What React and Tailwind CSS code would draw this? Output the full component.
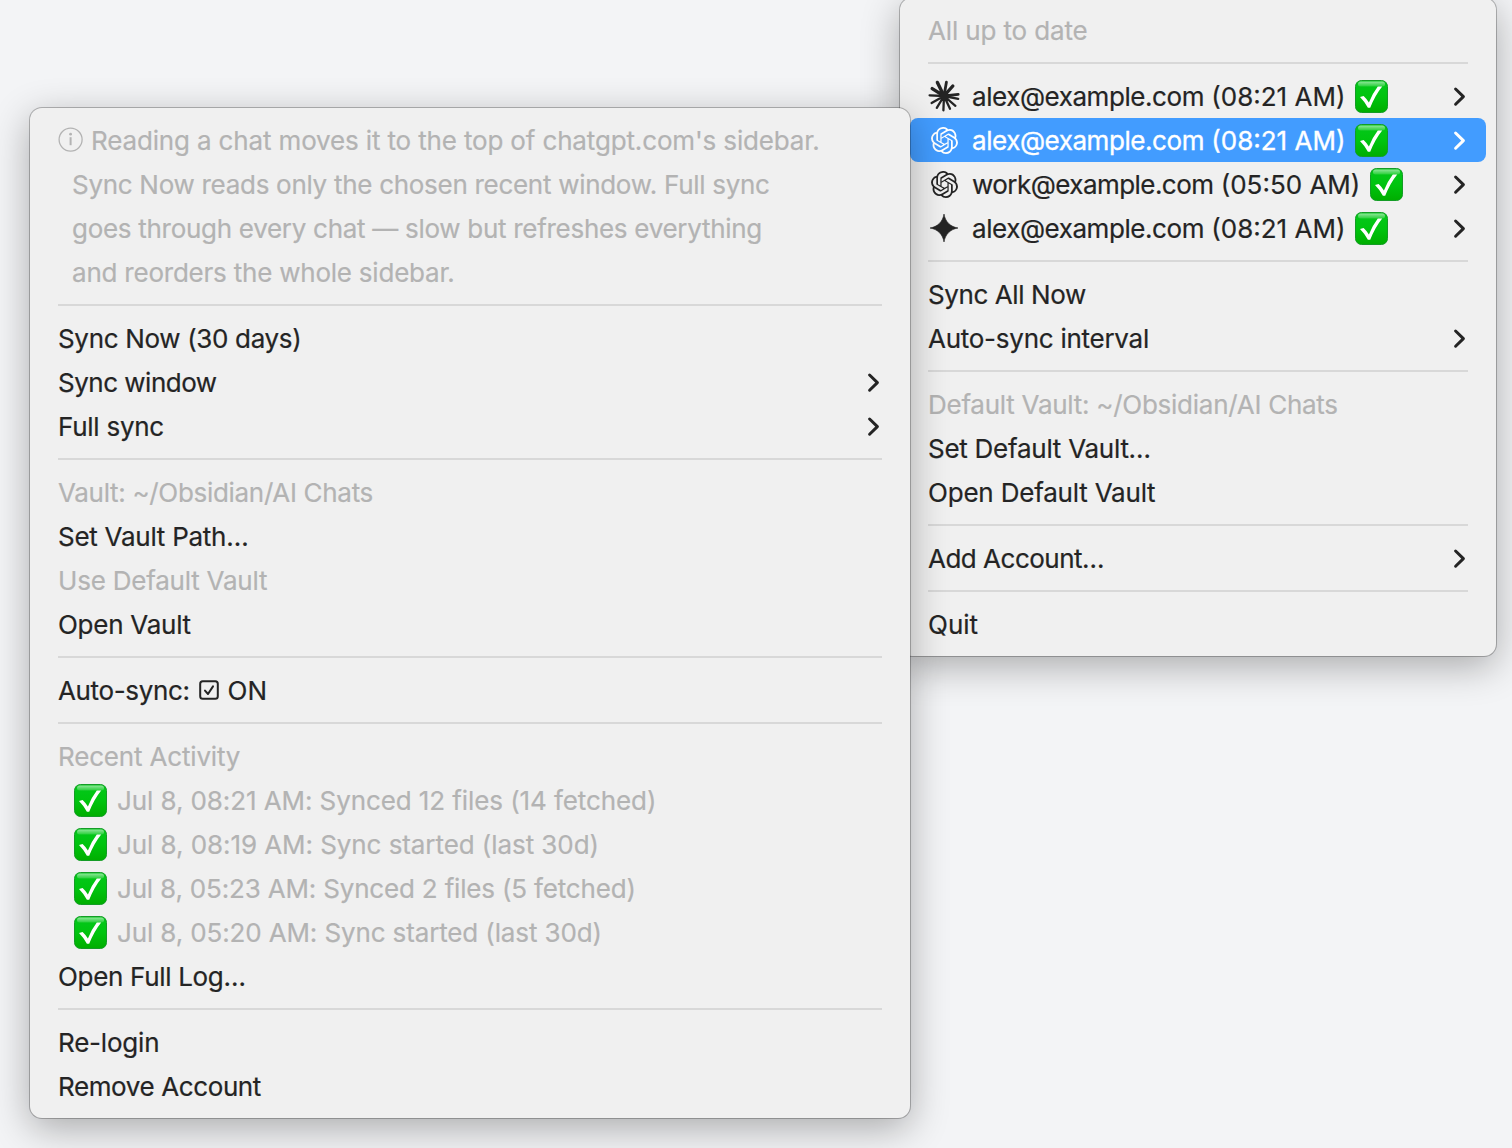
import React from "react";
import { SiOpenai } from "react-icons/si";

const Burst = () => (
  <svg className="h-[32px] w-[32px]" viewBox="0 0 32 32" fill="none" stroke="currentColor" strokeLinecap="round">
    <path strokeWidth="3.4" d="M16 16 9.4 2.4M16 16 24.8 6M16 16 4.2 8.6" />
    <path strokeWidth="2.8" d="M16 16 18.4 2.2M16 16 30.2 14.4" />
    <path strokeWidth="2.3" d="M16 16 1.6 15.4M16 16 30.2 18.8M16 16 3.6 23M16 16 27.4 25.8M16 16 8.8 27.8M16 16 22 28.8M16 16 15.4 30.4" />
    <circle cx="16.4" cy="16" r="4.4" fill="currentColor" stroke="none" />
  </svg>
);

const Spark = () => (
  <svg className="h-[28px] w-[28px]" viewBox="0 0 28 28" fill="currentColor">
    <path d="M14 0C15.2 7.6 20.4 12.8 28 14 20.4 15.2 15.2 20.4 14 28 12.8 20.4 7.6 15.2 0 14 7.6 12.8 12.8 7.6 14 0Z" stroke="currentColor" strokeWidth="0.6" />
  </svg>
);

const Chevron = () => (
  <svg className="relative -left-px ml-auto h-[22px] w-[14px] shrink-0" viewBox="0 0 14 22" fill="none" stroke="currentColor" strokeWidth="3" strokeLinecap="round" strokeLinejoin="round">
    <path d="M2.6 4 10.4 11.6 2.6 19.2" />
  </svg>
);

const CheckBadge = ({ className }) => (
  <svg className={`h-[33px] w-[33px] shrink-0 ${className}`} viewBox="0 0 33 33">
    <defs>
      <linearGradient id="badge" x1="0" y1="0" x2="0" y2="1">
        <stop offset="0" stopColor="#04c81c" />
        <stop offset="0.5" stopColor="#00c40f" />
        <stop offset="1" stopColor="#00ae00" />
      </linearGradient>
      <linearGradient id="gloss" x1="0" y1="0" x2="0" y2="1">
        <stop offset="0" stopColor="#fff" stopOpacity="0.55" />
        <stop offset="1" stopColor="#fff" stopOpacity="0.15" />
      </linearGradient>
    </defs>
    <rect x="0.5" y="0.5" width="32" height="32" rx="6" fill="url(#badge)" stroke="#149c26" />
    <rect x="3" y="1.5" width="27" height="5" rx="2.5" fill="url(#gloss)" />
    <path d="M5 17 8.6 16Q11.8 19 13.9 22.4 17.4 13.4 22.8 6.4L27.2 6.4Q19.8 15.6 15.2 27.8L12.9 27.8Q9.6 21.6 5 17Z" fill="#fff" />
  </svg>
);

const InfoIcon = () => (
  <svg className="mr-[7px] h-[26px] w-[26px] shrink-0" viewBox="0 0 26 26" fill="none" stroke="currentColor">
    <circle cx="12.6" cy="12.6" r="11.5" strokeWidth="1.3" />
    <path d="M12.6 10.2V18.2" strokeWidth="2" />
    <circle cx="12.6" cy="7.2" r="1.4" fill="currentColor" stroke="none" />
  </svg>
);

const Checkbox = () => (
  <svg className="mx-[9px] h-[20px] w-[20px] shrink-0" viewBox="0 0 20 20" fill="none" stroke="currentColor" strokeWidth="2" strokeLinecap="round" strokeLinejoin="round">
    <rect x="1.2" y="1.2" width="17.6" height="17.6" rx="2.5" />
    <path d="M6 10.6 9 14 14 6.4" />
  </svg>
);

const Menu = ({ className, children }) => (
  <div className={`absolute rounded-[12px] bg-[#f0f0f0] p-[10px] shadow-[0_0_0_1px_rgba(0,0,0,0.25),0_10px_38px_rgba(0,0,0,0.31)] ${className}`}>
    {children}
  </div>
);

const Item = ({ label, time, spacing = "tracking-[-0.26px]", muted, active, arrow, icon, before, after, indent }) => (
  <div
    className={`flex h-[44px] items-center rounded-[8px] px-[18px] ${
      active
        ? "bg-[#429cff] text-white [-webkit-text-stroke:0.35px_white]"
        : muted
        ? "text-[#b3b3b3] [-webkit-text-stroke:0.2px_#b3b3b3]"
        : "text-[#242424] [-webkit-text-stroke:0.2px_#242424]"
    }`}
  >
    {icon && <span className="mr-[12px] flex w-[32px] shrink-0 justify-center">{icon}</span>}
    {before}
    <span className={`relative top-px whitespace-pre ${indent ? "ml-[14px]" : ""} ${spacing}`}>
      {label}
      {time && <span className="tracking-normal"> ({time})</span>}
    </span>
    {after}
    {arrow && <Chevron />}
  </div>
);

const Separator = () => (
  <div className="flex h-[22px] items-center px-[18px]">
    <div className="h-[2px] w-full bg-[#d8d8d8]" />
  </div>
);

const accounts = [
  { label: "alex@example.com", time: "08:21 AM", icon: <Burst />, spacing: "tracking-[-0.44px]" },
  { label: "alex@example.com", time: "08:21 AM", icon: <SiOpenai size={27} />, spacing: "tracking-[-0.44px]", active: true },
  { label: "work@example.com", time: "05:50 AM", icon: <SiOpenai size={27} />, spacing: "tracking-[-0.55px]" },
  { label: "alex@example.com", time: "08:21 AM", icon: <Spark />, spacing: "tracking-[-0.44px]" },
];

const activity = [
  { label: "Jul 8, 08:21 AM: Synced 12 files (14 fetched)", spacing: "tracking-[-0.09px]" },
  { label: "Jul 8, 08:19 AM: Sync started (last 30d)", spacing: "tracking-[-0.07px]" },
  { label: "Jul 8, 05:23 AM: Synced 2 files (5 fetched)", spacing: "tracking-[-0.18px]" },
  { label: "Jul 8, 05:20 AM: Sync started (last 30d)", spacing: "tracking-[-0.13px]" },
];

const App = () => {
  return (
    <div className="relative h-[1148px] w-[1512px] overflow-hidden bg-[#f3f4f6] font-['Inter',sans-serif] text-[26px] leading-[44px]">
      <Menu className="-top-[2px] left-[900px] w-[596px]">
        <Item label="All up to date" muted spacing="tracking-[-0.14px]" />
        <Separator />
        {accounts.map((account, i) => (
          <Item key={i} {...account} arrow after={<CheckBadge className="ml-[10px]" />} />
        ))}
        <Separator />
        <Item label="Sync All Now" spacing="tracking-[-0.4px]" />
        <Item label="Auto-sync interval" arrow />
        <Separator />
        <Item label="Default Vault: ~/Obsidian/AI Chats" muted />
        <Item label="Set Default Vault…" />
        <Item label="Open Default Vault" spacing="tracking-[-0.2px]" />
        <Separator />
        <Item label="Add Account…" arrow spacing="tracking-[-0.5px]" />
        <Separator />
        <Item label="Quit" spacing="tracking-normal" />
      </Menu>

      <Menu className="left-[30px] top-[108px] w-[880px]">
        <Item label="Reading a chat moves it to the top of chatgpt.com's sidebar." muted spacing="tracking-[-0.15px]" before={<InfoIcon />} />
        <Item label="Sync Now reads only the chosen recent window. Full sync" muted indent spacing="tracking-[-0.29px]" />
        <Item label="goes through every chat — slow but refreshes everything" muted indent spacing="tracking-[-0.29px]" />
        <Item label="and reorders the whole sidebar." muted indent spacing="tracking-[-0.22px]" />
        <Separator />
        <Item label="Sync Now (30 days)" spacing="tracking-[-0.33px]" />
        <Item label="Sync window" arrow spacing="tracking-[-0.5px]" />
        <Item label="Full sync" arrow />
        <Separator />
        <Item label="Vault: ~/Obsidian/AI Chats" muted spacing="tracking-[-0.31px]" />
        <Item label="Set Vault Path…" />
        <Item label="Use Default Vault" muted spacing="tracking-[-0.22px]" />
        <Item label="Open Vault" />
        <Separator />
        <Item
          label="Auto-sync:"
          spacing="tracking-[-0.36px]"
          after={
            <>
              <Checkbox />
              <span className="relative top-px">ON</span>
            </>
          }
        />
        <Separator />
        <Item label="Recent Activity" muted spacing="tracking-[-0.17px]" />
        {activity.map((entry) => (
          <Item key={entry.label} {...entry} muted before={<CheckBadge className="ml-[16px] mr-[10px]" />} />
        ))}
        <Item label="Open Full Log…" spacing="tracking-[-0.32px]" />
        <Separator />
        <Item label="Re-login" spacing="tracking-[-0.2px]" />
        <Item label="Remove Account" spacing="tracking-[-0.39px]" />
      </Menu>
    </div>
  );
};

export default App;
